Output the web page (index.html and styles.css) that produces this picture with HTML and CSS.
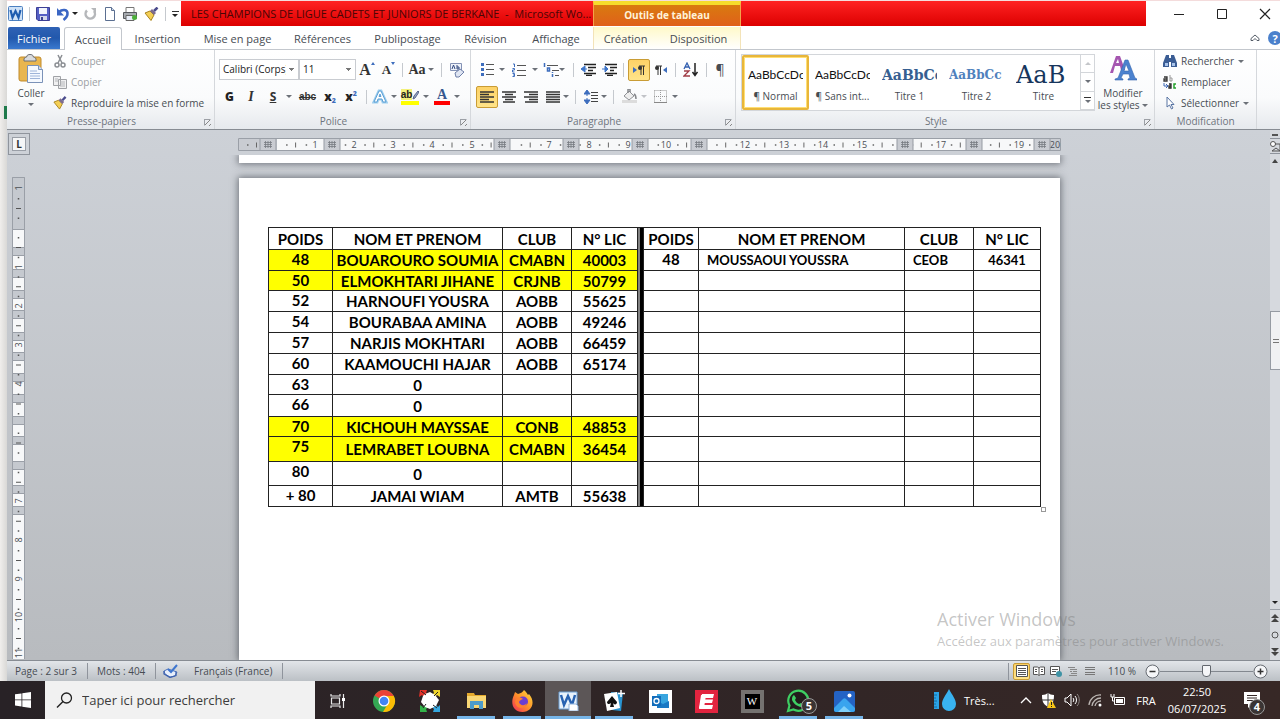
FILE: index.html
```html
<!DOCTYPE html>
<html lang="fr">
<head>
    <meta charset="UTF-8">
    <meta name="viewport" content="width=device-width, initial-scale=1.0">
    <title>LES CHAMPIONS DE LIGUE CADETS ET JUNIORS DE BERKANE - Microsoft Word</title>
    <link rel="stylesheet" href="styles.css">
</head>
<body>
    <div class="desktop">
        <div class="behind"><span class="behind-mark"></span></div>

        <div class="window">
            <!-- Title bar -->
            <header class="titlebar">
                <div class="quick-access">
                    <svg class="q-word" width="15" height="15" viewBox="0 0 15 15"><rect x=".5" y=".5" width="14" height="14" rx="1" fill="#cfe2f7" stroke="#4c80c0"/><path d="M2.500 4l2 7.500 3-6.500 3 6.500 2-7.500" fill="none" stroke="#1f5db0" stroke-width="2.200"/></svg>
                    <span class="sep"></span>
                    <button class="q-btn" aria-label="Enregistrer"><svg width="14" height="14" viewBox="0 0 14 14"><path d="M.5.5h13v13H2L.5 12z" fill="#5560c4" stroke="#3c3f95"/><path d="M3 1h8v6H3z" fill="#f2f5fc"/><path d="M4 9h7v4H4z" fill="#d4d8ea"/><path d="M5 10h2v3H5z" fill="#39408f"/></svg></button>
                    <button class="q-btn q-undo" aria-label="Annuler"><svg width="14" height="14" viewBox="0 0 14 14"><path d="M3 5c3-3 9-3 8.500 2 0 3-2 4.500-4 6" fill="none" stroke="#3b66c4" stroke-width="2.500"/><path d="M1 1v7.500h7z" fill="#3b66c4"/></svg><i class="caret dark"></i></button>
                    <button class="q-btn" aria-label="Rétablir"><svg width="13" height="14" viewBox="0 0 13 14"><path d="M3 3.500a4.700 4.700 0 1 0 7 .5" fill="none" stroke="#b5b7ba" stroke-width="2.500"/><path d="M7 1h5v5z" fill="#b5b7ba"/></svg></button>
                    <button class="q-btn" aria-label="Nouveau"><svg width="12" height="14" viewBox="0 0 12 14"><path d="M1.500.5h6l3 3v10h-9z" fill="#fff" stroke="#5b6f91"/><path d="M7.500.5v3h3" fill="#cdd9ec" stroke="#5b6f91"/></svg></button>
                    <button class="q-btn" aria-label="Impression rapide"><svg width="16" height="14" viewBox="0 0 16 14"><path d="M4 .5h8v5H4z" fill="#fff" stroke="#777"/><path d="M1.500 5.500h13v6h-13z" fill="#a7abb0" stroke="#55585d"/><path d="M4 8.500h8v5H4z" fill="#e8eef8" stroke="#666"/><circle cx="12.500" cy="10.500" r="2.500" fill="#4caf3a"/></svg></button>
                    <button class="q-btn" aria-label="Reproduire la mise en forme"><svg width="15" height="14" viewBox="0 0 15 14"><path d="M1 6l5-2 4 4-3 5.500z" fill="#f4cf55" stroke="#a8821d"/><path d="M6 4l2-2 4 4-2 2z" fill="#7d6c8f"/><path d="M10 4l3.500-3.500" stroke="#4a4b8c" stroke-width="2.500"/></svg></button>
                    <span class="sep"></span>
                    <button class="q-btn q-more" aria-label="Personnaliser"><i class="bar"></i><i class="caret dark"></i></button>
                </div>
                <div class="title-text">LES CHAMPIONS DE LIGUE CADETS ET JUNIORS DE BERKANE &nbsp;-&nbsp; Microsoft Wo...</div>
                <div class="context-title">Outils de tableau</div>
                <div class="title-rest"></div>
                <div class="window-buttons">
                    <button aria-label="Réduire"><svg width="12" height="12" viewBox="0 0 12 12"><path d="M1 6.500h10" stroke="#222"/></svg></button>
                    <button aria-label="Agrandir"><svg width="12" height="12" viewBox="0 0 12 12"><path d="M1.500 1.500h9v9h-9z" fill="none" stroke="#222"/></svg></button>
                    <button aria-label="Fermer"><svg width="12" height="12" viewBox="0 0 12 12"><path d="M1 1l10 10M11 1L1 11" stroke="#222" stroke-width="1.200"/></svg></button>
                </div>
            </header>

            <!-- Ribbon tabs -->
            <nav class="tabs">
                <button class="tab file">Fichier</button>
                <button class="tab active">Accueil</button>
                <button class="tab t-insert">Insertion</button>
                <button class="tab t-layout">Mise en page</button>
                <button class="tab t-refs">Références</button>
                <button class="tab t-mail">Publipostage</button>
                <button class="tab t-review">Révision</button>
                <button class="tab t-view">Affichage</button>
                <div class="context-tabs">
                    <button class="tab">Création</button>
                    <button class="tab">Disposition</button>
                </div>
                <div class="tabs-end">
                    <button aria-label="Réduire le ruban"><svg width="10" height="8" viewBox="0 0 10 8"><path d="M1 4.500L5 1l4 3.500v2H7L5 4.500 3 6.500H1z" fill="#fff" stroke="#555d68"/></svg></button>
                    <button class="help" aria-label="Aide">?</button>
                </div>
            </nav>

            <!-- Ribbon -->
            <section class="ribbon">
                <div class="group">
                    <div class="group-body clipboard">
                        <button class="big">
                            <svg width="26" height="29" viewBox="0 0 26 29"><rect x="1" y="3" width="22" height="24" rx="2" fill="#e9b64f" stroke="#c08a2c"/><path d="M6 5c0-2 3-1 3-3s6-2 6 0 3 1 3 3v2H6z" fill="#d9dbde" stroke="#6b6f75"/><path d="M9.500 11.500h11l4 4v13h-15z" fill="#f5f9ff" stroke="#7b92b8"/><path d="M20.500 11.500v4h4" fill="#cfdcf0" stroke="#7b92b8"/><path d="M12 17h7M12 19.500h10M12 22h10M12 24.500h10" stroke="#9fb4d8"/></svg>
                            <span>Coller</span><i class="caret"></i>
                        </button>
                        <div class="stack">
                            <button class="line-btn off"><svg width="14" height="14" viewBox="0 0 14 14"><path d="M5 1l4 8M9 1L5 9" stroke="#8b8e93" stroke-width="1.500"/><circle cx="4" cy="11" r="2" fill="none" stroke="#8b8e93" stroke-width="1.500"/><circle cx="10" cy="11" r="2" fill="none" stroke="#8b8e93" stroke-width="1.500"/></svg>Couper</button>
                            <button class="line-btn off"><svg width="14" height="14" viewBox="0 0 14 14"><path d="M.5 1.500h7v9h-7zM5.500 4.500h8v9h-8z" fill="#f0f0f1" stroke="#a0a2a6"/><path d="M2 4h3M2 6h3M7 7h5M7 9h5M7 11h5" stroke="#b5b7ba"/></svg>Copier</button>
                            <button class="line-btn"><svg width="14" height="14" viewBox="0 0 15 14"><path d="M1 6l5-2 4 4-3 5.500z" fill="#f4cf55" stroke="#a8821d"/><path d="M6 4l2-2 4 4-2 2z" fill="#7d6c8f"/><path d="M10 4l3.500-3.500" stroke="#4a4b8c" stroke-width="2.500"/></svg>Reproduire la mise en forme</button>
                        </div>
                    </div>
                    <div class="group-title">Presse-papiers<i class="launcher"></i></div>
                </div>

                <div class="group">
                    <div class="group-body rows">
                        <div class="row font-row1">
                            <select class="combo" aria-label="Police"><option>Calibri (Corps)</option></select>
                            <select class="combo" aria-label="Taille"><option>11</option></select>
                            <button class="serif grow">A<i class="up"></i></button>
                            <button class="serif shrink">A<i class="down"></i></button>
                            <span class="sep"></span>
                            <button class="serif case">Aa<i class="caret"></i></button>
                            <span class="sep"></span>
                            <button aria-label="Effacer la mise en forme"><svg width="16" height="16" viewBox="0 0 16 16"><path d="M1.500 1.500h11v7h-11z" fill="#eef2fa" stroke="#8492b5"/><path d="M3 7l1.500-4L6 7M8 3v4h2V5H8" fill="none" stroke="#30487f"/><path d="M6 11l5-4 4 3-5 5H7z" fill="#dfe5f2" stroke="#6e7fa8"/></svg></button>
                        </div>
                        <div class="row font-row2">
                            <button class="bold">G</button>
                            <button class="italic">I</button>
                            <button class="under">S</button>
                            <i class="caret"></i>
                            <button class="strike">abc</button>
                            <button class="bold script">x<sub>2</sub></button>
                            <button class="bold script">x<sup>2</sup></button>
                            <span class="sep"></span>
                            <button aria-label="Effets de texte"><svg width="16" height="15" viewBox="0 0 16 15"><path d="M2 13L7 2h2l5 11h-3l-1-3H6l-1 3z" fill="#fff" stroke="#9ccdee" stroke-width="3"/><path d="M2 13L7 2h2l5 11h-3l-1-3H6l-1 3zM7 7.500h2L8 5z" fill="#fff" stroke="#5b9fd4"/></svg></button>
                            <i class="caret"></i>
                            <button class="marker"><span>ab</span><svg width="7" height="10" viewBox="0 0 7 10"><path d="M1 9l1-3 4-5 1 1-4 6z" fill="#9aa7c7" stroke="#56648a"/></svg></button>
                            <i class="caret"></i>
                            <button class="font-color">A</button>
                            <i class="caret"></i>
                        </div>
                    </div>
                    <div class="group-title">Police<i class="launcher"></i></div>
                </div>

                <div class="group">
                    <div class="group-body rows">
                        <div class="row para-row1">
                            <button aria-label="Puces"><svg width="13" height="13" viewBox="0 0 13 13"><path d="M0 1.500h3M0 6.500h3M0 11.500h3" stroke="#3d6dbd" stroke-width="3"/><path d="M5 1.500h8M5 6.500h8M5 11.500h8" stroke="#555"/></svg></button>
                            <i class="caret"></i>
                            <button aria-label="Numérotation"><svg width="14" height="14" viewBox="0 0 14 14"><path d="M1 1h1.500v3M.5 5.500h2v1.500h-2v2h2M.5 10.500h2v3h-2M1 12h1" fill="none" stroke="#3d6dbd"/><path d="M5 2.500h9M5 7.500h9M5 12.500h9" stroke="#555"/></svg></button>
                            <i class="caret"></i>
                            <button class="with-caret" aria-label="Liste à plusieurs niveaux"><svg width="16" height="14" viewBox="0 0 16 14"><path d="M1.500 0v4M4.500 5v3h2V5zM9.500 9v1M9.500 11v3" fill="none" stroke="#3d6dbd" stroke-width="1.500"/><path d="M4 2.500h11M9 7.500h7M12 12.500h4" stroke="#555"/></svg><i class="caret"></i></button>
                            <span class="sep"></span>
                            <button aria-label="Diminuer le retrait"><svg width="15" height="13" viewBox="0 0 15 13"><path d="M3 1.500h12M7 4.500h8M7 7.500h5M3 10.500h12M5 12.500h6" stroke="#222" stroke-width="1.500"/><path d="M0 6l4-3v6zM3 6h3" fill="#3d74c8" stroke="#3d74c8"/></svg></button>
                            <button aria-label="Augmenter le retrait"><svg width="15" height="13" viewBox="0 0 15 13"><path d="M3 1.500h12M8 4.500h7M8 7.500h4M3 10.500h12M5 12.500h6" stroke="#222" stroke-width="1.500"/><path d="M6 6L3 3v6zM0 6h4" fill="#3d74c8" stroke="#3d74c8"/></svg></button>
                            <span class="sep"></span>
                            <button class="on" aria-label="De gauche à droite"><svg width="12" height="10" viewBox="0 0 12 10"><path d="M0 2l4 3-4 3z" fill="#3d6dbd"/><path d="M8 1v9M10.500 1v9M6 1h6" stroke="#333"/><circle cx="7" cy="3" r="2" fill="#333"/></svg></button>
                            <button aria-label="De droite à gauche"><svg width="12" height="10" viewBox="0 0 12 10"><path d="M12 2L8 5l4 3z" fill="#3d6dbd"/><path d="M3 1v9M5.500 1v9M1 1h6" stroke="#333"/><circle cx="2" cy="3" r="2" fill="#333"/></svg></button>
                            <span class="sep"></span>
                            <button aria-label="Trier"><svg width="15" height="15" viewBox="0 0 15 15"><path d="M1 7l3-6 3 6M2 5h4" fill="none" stroke="#3460b0" stroke-width="1.300"/><path d="M1 9h5l-5 5h6" fill="none" stroke="#a03c46" stroke-width="1.300"/><path d="M12 1v12M9.500 10l2.500 3.500 2.500-3.500" fill="none" stroke="#222" stroke-width="1.500"/></svg></button>
                            <span class="sep"></span>
                            <button class="pilcrow">¶</button>
                        </div>
                        <div class="row para-row2">
                            <button class="on" aria-label="Aligner à gauche"><svg width="14" height="12" viewBox="0 0 14 12"><path d="M0 1h14M0 3.500h9M0 6h14M0 8.500h9M0 11h14" stroke="#333" stroke-width="1.300"/></svg></button>
                            <button aria-label="Centrer"><svg width="14" height="12" viewBox="0 0 14 12"><path d="M0 1h14M3 3.500h8M0 6h14M3 8.500h8M1 11h12" stroke="#333" stroke-width="1.300"/></svg></button>
                            <button aria-label="Aligner à droite"><svg width="14" height="12" viewBox="0 0 14 12"><path d="M0 1h14M5 3.500h9M0 6h14M5 8.500h9M1 11h13" stroke="#333" stroke-width="1.300"/></svg></button>
                            <button aria-label="Justifier"><svg width="14" height="12" viewBox="0 0 14 12"><path d="M0 1h14M0 3.500h14M0 6h14M0 8.500h14M0 11h14" stroke="#333" stroke-width="1.300"/></svg></button>
                            <i class="caret"></i>
                            <span class="sep"></span>
                            <button aria-label="Interligne"><svg width="14" height="14" viewBox="0 0 14 14"><path d="M3 0l3 4H0zM3 14l3-4H0zM3 3v3M3 8v3" fill="#3d6dbd" stroke="#3d6dbd"/><path d="M7 2.500h7M7 5.500h7M7 8.500h7M7 11.500h7" stroke="#444"/></svg></button>
                            <i class="caret"></i>
                            <span class="sep"></span>
                            <button aria-label="Trame de fond"><svg width="15" height="15" viewBox="0 0 15 15"><path d="M0 11h15v3H0z" fill="#dcdcdc"/><path d="M2 7l5-5 5 5-5 4z" fill="#eee" stroke="#909296"/><path d="M6 4V0h2v3M12 5c2 1 2 3 2 5" fill="none" stroke="#85878b" stroke-width="1.500"/></svg></button>
                            <i class="caret off"></i>
                            <button aria-label="Bordures"><svg width="13" height="13" viewBox="0 0 13 13"><path d="M.5.5h12v12M.5.5v12M6.500 0v13M0 6.500h13" fill="none" stroke="#999" stroke-dasharray="1 1"/><path d="M0 12.500h13" stroke="#888"/></svg></button>
                            <i class="caret"></i>
                        </div>
                    </div>
                    <div class="group-title">Paragraphe<i class="launcher"></i></div>
                </div>

                <div class="group">
                    <div class="group-body styles">
                        <div class="gallery">
                            <button class="style-item selected"><span class="sample">AaBbCcDc</span><span class="name">¶ Normal</span></button>
                            <button class="style-item"><span class="sample">AaBbCcDc</span><span class="name">¶ Sans int...</span></button>
                            <button class="style-item"><span class="sample h1">AaBbCc</span><span class="name">Titre 1</span></button>
                            <button class="style-item"><span class="sample h2">AaBbCc</span><span class="name">Titre 2</span></button>
                            <button class="style-item"><span class="sample h0">AaB</span><span class="name">Titre</span></button>
                            <div class="gallery-scroll">
                                <button aria-label="Précédent"><i class="caret flip off"></i></button>
                                <button aria-label="Suivant"><i class="caret"></i></button>
                                <button aria-label="Autres"><i class="bar"></i><i class="caret"></i></button>
                            </div>
                        </div>
                        <button class="big change">
                            <svg width="28" height="27" viewBox="0 0 28 27"><path d="M1 18L7 1h4l5 14h-4l-1-4H6l-2 7zM7 8h3L9 4z" fill="#a556b0"/><path d="M6 25v-1l3-1 7-18h3l7 18 2 1v1h-9v-1l2-1-1-4h-6l-2 4 2 1v1zM15 16h5l-3-7z" fill="#4b82cf" stroke="#3567ae" stroke-width=".6"/></svg>
                            <span>Modifier<br>les styles <i class="caret"></i></span>
                        </button>
                    </div>
                    <div class="group-title">Style<i class="launcher"></i></div>
                </div>

                <div class="group">
                    <div class="group-body">
                        <div class="stack editing">
                            <button class="line-btn"><svg width="14" height="12" viewBox="0 0 14 12"><path d="M3 0h3v3h2V0h3l3 8v4H8V7H6v5H0V8z" fill="#3b5d94"/><path d="M2 8h3v3H2zM9 8h3v3H9z" fill="#a9c4ea"/></svg>Rechercher<i class="caret"></i></button>
                            <button class="line-btn"><svg width="14" height="14" viewBox="0 0 14 14"><path d="M1 2h3v4H1V4h3" fill="none" stroke="#333" stroke-width="1.300"/><path d="M7 0v6h2V3H7" fill="none" stroke="#999"/><path d="M1 8v3h3M3 9l2 2-2 2" fill="none" stroke="#3b66b4"/><path d="M6 9h2v4H6v-2h2" fill="none" stroke="#222" stroke-width="1.300"/><path d="M13 9h-2v4h2" fill="none" stroke="#25a02c" stroke-width="1.500"/></svg>Remplacer</button>
                            <button class="line-btn"><svg width="14" height="14" viewBox="0 0 14 14"><path d="M4 1v10l2.500-2 2 4 1.500-1-2-3.500h3z" fill="#fff" stroke="#5874a3"/></svg>Sélectionner<i class="caret"></i></button>
                        </div>
                    </div>
                    <div class="group-title plain">Modification</div>
                </div>
            </section>

            <!-- Rulers, document and scroll bar -->
            <main class="workspace">
                <div class="ruler-corner"><button aria-label="Tabulation">L</button></div>
                <div class="ruler-top">
                    <svg width="823" height="14" viewBox="0 0 823 14">
                        <defs>
                            <g id="colmark"><path d="M0 1h16v11H0z" fill="#c9ccd2"/><path d="M0 1v11M16 1v11" stroke="#969ba3"/><path d="M4 4.500h8M4 6.500h8M4 8.500h8M5.500 3v7M8 3v7M10.500 3v7" stroke="#777b82" stroke-width=".8"/></g>
                        </defs>
                        <path d="M.5.5h822v12H.5z" fill="#f7f8f9" stroke="#9a9fa7"/>
                        <path d="M1 1h38v11H1zM796 1h26v11h-26z" fill="#c9ccd2"/>
                        <path d="M9 7h807" stroke="#666" stroke-width="1.500" stroke-dasharray="1.500 18.050"/>
                        <path d="M18 7h800" stroke="#666" stroke-width="5" stroke-dasharray="1 38.100"/>
                        <g class="ruler-num">
                            <text x="77" y="10">1</text><text x="116" y="10">2</text><text x="155" y="10">3</text><text x="194" y="10">4</text><text x="234" y="10">5</text><text x="311" y="10">7</text><text x="351" y="10">8</text><text x="390" y="10">9</text><text x="428" y="10">10</text><text x="507" y="10">12</text><text x="546" y="10">13</text><text x="585" y="10">14</text><text x="624" y="10">15</text><text x="703" y="10">17</text><text x="781" y="10">19</text><text x="817" y="10">20</text>
                        </g>
                        <use href="#colmark" x="22"/><use href="#colmark" x="86"/><use href="#colmark" x="256"/><use href="#colmark" x="325"/><use href="#colmark" x="394"/><use href="#colmark" x="453"/><use href="#colmark" x="659"/><use href="#colmark" x="728"/><use href="#colmark" x="796"/>
                    </svg>
                </div>
                <div class="ruler-left">
                    <svg width="14" height="482" viewBox="0 0 14 482">
                        <path d="M.5.500h12v482h-12z" fill="#f7f8f9" stroke="#9a9fa7"/>
                        <g fill="#c5c9cf" stroke="#9a9fa7"><path d="M.5.500h12v52h-12zM.5 70.500h12v8h-12zM.5 92.500h12v8h-12zM.5 113.500h12v8h-12zM.5 133.500h12v8h-12zM.5 155.500h12v8h-12zM.5 175.500h12v8h-12zM.5 196.500h12v8h-12zM.5 217.500h12v8h-12zM.5 239.500h12v8h-12zM.5 259.500h12v8h-12zM.5 284.500h12v8h-12zM.5 308.500h12v8h-12zM.5 329.500h12v8h-12z"/></g>
                        <path d="M6.500 21v460" stroke="#555" stroke-width="1.500" stroke-dasharray="1.500 18.050"/>
                        <path d="M6.500 31v450" stroke="#555" stroke-width="5" stroke-dasharray="1 38.100"/>
                        <g class="ruler-num">
                            <text transform="translate(10 11) rotate(-90)">1</text><text transform="translate(10 90) rotate(-90)">1</text><text transform="translate(10 129) rotate(-90)">2</text><text transform="translate(10 168) rotate(-90)">3</text><text transform="translate(10 207) rotate(-90)">4</text><text transform="translate(10 324) rotate(-90)">7</text><text transform="translate(10 363) rotate(-90)">8</text><text transform="translate(10 402) rotate(-90)">9</text><text transform="translate(10 440) rotate(-90)">10</text><text transform="translate(10 476) rotate(-90)">11</text>
                        </g>
                    </svg>
                </div>

                <div class="document">
                    <div class="page previous"></div>
                    <article class="page current">
                        <table>
                            <colgroup>
                                <col class="c-poids"><col class="c-nom"><col class="c-club"><col class="c-lic"><col class="c-bar"><col class="c-poids2"><col class="c-nom2"><col class="c-club2"><col class="c-lic2">
                            </colgroup>
                            <tr class="h22"><th>POIDS</th><th>NOM ET PRENOM</th><th>CLUB</th><th>N° LIC</th><td class="divider" rowspan="13"></td><th>POIDS</th><th>NOM ET PRENOM</th><th>CLUB</th><th>N° LIC</th></tr>
                            <tr class="h21 winner"><td class="poids">48</td><td>BOUAROURO SOUMIA</td><td>CMABN</td><td>40003</td><td class="poids">48</td><td class="small left">MOUSSAOUI YOUSSRA</td><td class="small left">CEOB</td><td class="small">46341</td></tr>
                            <tr class="h20 winner"><td class="poids">50</td><td>ELMOKHTARI JIHANE</td><td>CRJNB</td><td>50799</td><td></td><td></td><td></td><td></td></tr>
                            <tr class="h21"><td class="poids">52</td><td>HARNOUFI YOUSRA</td><td>AOBB</td><td>55625</td><td></td><td></td><td></td><td></td></tr>
                            <tr class="h21"><td class="poids">54</td><td>BOURABAA AMINA</td><td>AOBB</td><td>49246</td><td></td><td></td><td></td><td></td></tr>
                            <tr class="h21"><td class="poids">57</td><td>NARJIS MOKHTARI</td><td>AOBB</td><td>66459</td><td></td><td></td><td></td><td></td></tr>
                            <tr class="h21"><td class="poids">60</td><td>KAAMOUCHI HAJAR</td><td>AOBB</td><td>65174</td><td></td><td></td><td></td><td></td></tr>
                            <tr class="h20"><td class="poids">63</td><td>0</td><td></td><td></td><td></td><td></td><td></td><td></td></tr>
                            <tr class="h22"><td class="poids">66</td><td>0</td><td></td><td></td><td></td><td></td><td></td><td></td></tr>
                            <tr class="h20 winner"><td class="poids">70</td><td>KICHOUH MAYSSAE</td><td>CONB</td><td>48853</td><td></td><td></td><td></td><td></td></tr>
                            <tr class="h25 winner"><td class="poids">75</td><td>LEMRABET LOUBNA</td><td>CMABN</td><td>36454</td><td></td><td></td><td></td><td></td></tr>
                            <tr class="h24"><td class="poids">80</td><td>0</td><td></td><td></td><td></td><td></td><td></td><td></td></tr>
                            <tr class="h21"><td class="poids">+ 80</td><td>JAMAI WIAM</td><td>AMTB</td><td>55638</td><td></td><td></td><td></td><td></td></tr>
                        </table>
                        <span class="table-handle"></span>
                    </article>
                </div>

                <div class="scrollbar">
                    <span class="split"></span>
                    <button class="ruler-toggle" aria-label="Règle"><svg width="12" height="13" viewBox="0 0 12 13"><circle cx="4" cy="4" r="2.500" fill="#fff" stroke="#555"/><path d="M6 4h5v7H3l4-3 4 3" fill="none" stroke="#555"/></svg></button>
                    <i class="caret flip dark"></i>
                    <span class="track-top"></span>
                    <span class="thumb"></span>
                    <span class="track-bottom"></span>
                    <i class="caret dark"></i>
                    <div class="browse">
                        <svg width="8" height="8" viewBox="0 0 8 8"><path d="M4 0l4 4H0zM4 4l4 4H0z" fill="#444"/></svg>
                        <svg width="8" height="8" viewBox="0 0 8 8"><circle cx="4" cy="4" r="3" fill="none" stroke="#555"/></svg>
                        <svg width="8" height="8" viewBox="0 0 8 8"><path d="M0 0h8L4 4zM0 4h8L4 8z" fill="#444"/></svg>
                    </div>
                </div>
            </main>

            <!-- Status bar -->
            <footer class="status">
                <span class="s-page">Page : 2 sur 3</span>
                <span class="s-words">Mots : 404</span>
                <span class="s-lang"><svg width="16" height="14" viewBox="0 0 16 14"><path d="M1 7l4-2 9 3-2 4-5 1-5-3z" fill="#e8effb" stroke="#4c70b8"/><path d="M1 7v3l6 3.500 6-2V8" fill="none" stroke="#3e62ae" stroke-width="1.300"/><path d="M5 5l3 3 6-7" fill="none" stroke="#3f76cf" stroke-width="2"/></svg>Français (France)</span>
                <div class="views">
                    <button class="on" aria-label="Page"><svg width="12" height="12" viewBox="0 0 12 12"><path d="M.5.5h11v11H.5z" fill="#fff" stroke="#555"/><path d="M2 3.500h8M2 5.500h8M2 7.500h8M2 9.500h8" stroke="#555"/></svg></button>
                    <button aria-label="Lecture plein écran"><svg width="12" height="10" viewBox="0 0 12 10"><path d="M.5 1h4L6 2l1.500-1h4v7.500h-4L6 9.500l-1.500-1h-4zM6 2v7" fill="#fff" stroke="#555"/><path d="M2 3.500h2M2 5.500h2M8 3.500h2M8 5.500h2" stroke="#555"/></svg></button>
                    <button aria-label="Web"><svg width="12" height="11" viewBox="0 0 12 11"><path d="M.5.5h9v8h-9z" fill="#fff" stroke="#555"/><path d="M2 3.500h6M2 5.500h4" stroke="#555"/><circle cx="9" cy="8" r="3" fill="#3e93a5"/></svg></button>
                    <button aria-label="Plan"><svg width="10" height="10" viewBox="0 0 10 10"><path d="M0 1.500h7M2 3.500h7M2 5.500h2M5 5.500h4M3 7.500h6M1 9.500h8" stroke="#888"/></svg></button>
                    <button aria-label="Brouillon"><svg width="10" height="10" viewBox="0 0 10 10"><path d="M0 1.500h10M0 3.500h10M0 6.500h10M0 8.500h10" stroke="#777"/></svg></button>
                </div>
                <label class="zoom-value" for="zoom">110 %</label>
                <button class="round" aria-label="Zoom arrière"><svg width="15" height="15" viewBox="0 0 15 15"><circle cx="7.500" cy="7.500" r="6.500" fill="#f5f6f8" stroke="#666b72"/><path d="M4.500 7.500h6" stroke="#333" stroke-width="1.500"/></svg></button>
                <input id="zoom" type="range" min="0" max="100" value="50">
                <button class="round" aria-label="Zoom avant"><svg width="15" height="15" viewBox="0 0 15 15"><circle cx="7.500" cy="7.500" r="6.500" fill="#f5f6f8" stroke="#666b72"/><path d="M4.500 7.500h6M7.500 4.500v6" stroke="#333" stroke-width="1.500"/></svg></button>
            </footer>

            <div class="activation">
                <p class="activation-title">Activer Windows</p>
                <p>Accédez aux paramètres pour activer Windows.</p>
            </div>
        </div>
    </div>

    <!-- Windows taskbar -->
    <div class="taskbar">
        <button class="start" aria-label="Démarrer"><svg width="16" height="16" viewBox="0 0 16 16"><path d="M0 2.300L6.500 1.400v6.100H0zM7.300 1.300L16 0v7.500H7.300zM0 8.300h6.500v6.200L0 13.600zM7.300 8.300H16V16l-8.700-1.300z" fill="#fff"/></svg></button>
        <label class="search">
            <svg width="17" height="17" viewBox="0 0 17 17"><circle cx="10.500" cy="6" r="5" fill="none" stroke="#222" stroke-width="1.300"/><path d="M7 9.500L1 15.500" stroke="#222" stroke-width="1.400"/></svg>
            <input type="text" placeholder="Taper ici pour rechercher">
        </label>
        <div class="apps">
            <button aria-label="Affichage des tâches"><svg width="16" height="16" viewBox="0 0 16 16"><path d="M1 1v2h9V1M1 15v-2h9v2M1.500 5h8v6h-8zM13.500 1v14" fill="none" stroke="#e8e8e8" stroke-width="1.200"/><path d="M12 5h3v3h-3z" fill="#fff"/></svg></button>
            <button aria-label="Chrome"><svg width="24" height="24" viewBox="0 0 24 24"><circle cx="12" cy="12" r="11" fill="#34a853"/><path d="M12 12L2.500 6.500A11 11 0 0 1 21.500 6.500L22 7H12z" fill="#ea4335"/><path d="M12 7h9.800A11 11 0 0 1 11 23l5-8.500z" fill="#fbbc05"/><circle cx="12" cy="12" r="5.500" fill="#fff"/><circle cx="12" cy="12" r="4.300" fill="#4285f4"/></svg></button>
            <button aria-label="Jeu de cartes"><svg width="24" height="24" viewBox="0 0 24 24"><path d="M2 1h7L8 4l6 6-3 3-7-7-3 2z" fill="#e43229"/><path d="M22 1v7l-3-2-7 7-3-3 7-6-1-3z" fill="#f0d52d"/><path d="M2 23v-7l3 2 7-7 3 3-7 6 1 3z" fill="#34b44a"/><path d="M22 23h-7l1-3-6-6 3-3 7 7 2-2z" fill="#35a7df"/><path d="M7 5l5-2 5 3 4 5-3 6-6 3-5-2-4-5 2-6z" fill="#fff"/><path d="M3 2l5 4M20 3l-4 4M19 19l-4-3M5 19l3-4" stroke="#222"/></svg></button>
            <button class="open" aria-label="Explorateur"><svg width="21" height="18" viewBox="0 0 21 18"><path d="M1 1h7l1 2h11v13H1z" fill="#e5aa2d"/><path d="M1 4h19v12H1z" fill="#f9d775"/><path d="M4 17V9h13v8h-4v-4H8v4z" fill="#4d9bc9"/></svg></button>
            <button class="open" aria-label="Firefox"><svg width="23" height="23" viewBox="0 0 23 23"><defs><linearGradient id="ff" x1="1" y1="0" x2="0" y2="1"><stop offset="0" stop-color="#ffe141"/><stop offset=".5" stop-color="#ff9029"/><stop offset="1" stop-color="#f2295c"/></linearGradient></defs><path d="M3 5l1-3 3 2c3-1 5-2 6-4 2 2 3 3 4 5l1-1c7 8 3 18-6.500 18S-1 13 3 5z" fill="url(#ff)"/><circle cx="12" cy="11.500" r="5" fill="#6b3ed1"/><path d="M5 9c3-3 6-1 7 0-2 1-3 1-4 3 1 4 6 4 8 1-1 6-11 7-12-1z" fill="#ff8130"/></svg></button>
            <button class="open current" aria-label="Word"><svg width="21" height="20" viewBox="0 0 21 20"><path d="M1 1h18v17H1z" fill="#e9f2fb" stroke="#6da0d6"/><path d="M3 4l3 10 4-9 4 9 3-10" fill="none" stroke="#2862b1" stroke-width="2.500"/><path d="M11 13h7l2 2v5h-9z" fill="#fff" stroke="#8fb3dd"/></svg></button>
            <button class="open" aria-label="Solitaire"><svg width="22" height="22" viewBox="0 0 22 22"><path d="M8 2l12 1-2 18-9-1z" fill="#2894d1"/><path d="M1 4l13-2 3 16-13 3z" fill="#fff"/><path d="M9 6l5 6c0 3-3 3-4 1l1 4H7l1-4c-2 2-4 1-4-1z" fill="#111"/><path d="M18 0v7M15 3.500h7" stroke="#fff" stroke-width="1.500"/></svg></button>
            <button aria-label="Outlook"><svg width="23" height="23" viewBox="0 0 23 23"><path d="M0 0h23v23H0z" fill="#fff"/><path d="M8 4h11v12H8z" fill="#38a5df"/><path d="M8 11l6 3 6-3v7H8z" fill="#1b79c4"/><path d="M3 6h9v10H3z" fill="#126dbb"/><circle cx="7.500" cy="11" r="2.500" fill="none" stroke="#fff" stroke-width="1.300"/></svg></button>
            <button aria-label="E"><svg width="23" height="23" viewBox="0 0 23 23"><path d="M0 0h23v23H0z" fill="#e2243f"/><path d="M7 4h12l-1 4H6zM6 9.500h12l-1 3.500H5zM5 15h13l-1 4H4z" fill="#fff"/><path d="M6 5h5L9 18H4z" fill="#fff"/></svg></button>
            <button aria-label="W"><span class="w-tile">W</span></button>
            <button class="open whatsapp" aria-label="WhatsApp"><svg width="24" height="24" viewBox="0 0 24 24"><path d="M2 22l1.500-5.500A10 10 0 1 1 7.500 20.500z" fill="#211d1c" stroke="#3ecf63" stroke-width="2.200"/><path d="M8 6l2 3-1 2c1 2 2 3 4 4l2-1 3 2c-1 3-4 2-6 1-3-1-5-4-6-6 0-2 0-4 2-5z" fill="#3ecf63"/></svg><span class="badge">5</span></button>
            <button class="open" aria-label="Photos"><svg width="21" height="21" viewBox="0 0 21 21"><rect width="21" height="21" rx="2" fill="#2463c4"/><path d="M0 17l9-9c1-1 2-1 3 0l9 9v2c0 1-1 2-2 2H2c-1 0-2-1-2-2z" fill="#39a4ee"/><path d="M4 21l6-6 7 6z" fill="#7fd0fa"/><circle cx="15.500" cy="4.500" r="2" fill="#fff"/></svg></button>
        </div>
        <div class="tray">
            <button class="weather"><svg width="22" height="23" viewBox="0 0 22 23"><path d="M0 3h5v17H0z" fill="#2ba3e6"/><path d="M0 6h3M0 9h2M0 12h3M0 15h2M0 18h3" stroke="#176c9e"/><path d="M15 0c3 6 7 10 7 15a7 7 0 0 1-14 0c0-5 4-9 7-15z" fill="#39b3f0"/></svg>Très...</button>
            <button aria-label="Icônes cachées"><svg width="12" height="8" viewBox="0 0 12 8"><path d="M1 7l5-5 5 5" fill="none" stroke="#fff" stroke-width="1.300"/></svg></button>
            <button aria-label="Sécurité"><svg width="14" height="15" viewBox="0 0 14 15"><path d="M0 2c3 0 4-1 6-2 2 1 3 2 6 2 0 6-1 9-6 12C1 11 0 8 0 2z" fill="#fff"/><path d="M6 0v14M0 7h12" stroke="#333"/><path d="M9 6l5 9H5z" fill="#f7c516"/><path d="M9.500 9v3M9.500 13v1" stroke="#222"/></svg></button>
            <button aria-label="Volume"><svg width="16" height="14" viewBox="0 0 16 14"><path d="M1 5h2l4-4v12L3 9H1z" fill="none" stroke="#fff"/><path d="M9 5c1 1 1 3 0 4M11 3c2 2 2 6 0 8" fill="none" stroke="#fff"/><path d="M13 1c3 3 3 9 0 12" fill="none" stroke="#8d8582"/></svg></button>
            <button aria-label="Réseau"><svg width="14" height="14" viewBox="0 0 14 14"><path d="M1 12A11 11 0 0 1 13 2M4 13a9 9 0 0 1 9-8M7 13a6 6 0 0 1 6-5" fill="none" stroke="#bbb5b2" stroke-width="1.300"/><circle cx="12" cy="12" r="1.500" fill="#fff"/></svg></button>
            <button aria-label="Batterie"><svg width="16" height="12" viewBox="0 0 16 12"><path d="M4.500 3.500h10v7h-10z" fill="none" stroke="#fff"/><path d="M6 5h7v4H6z" fill="#fff"/><path d="M1 0v3h3V0M2.500 3v4h2" fill="none" stroke="#fff"/></svg></button>
            <button class="lang">FRA</button>
            <button class="clock">22:50<br>06/07/2025</button>
            <button class="notice" aria-label="Notifications"><svg width="16" height="16" viewBox="0 0 16 16"><path d="M0 0h16v12H8l-4 4v-4H0z" fill="#fff"/><path d="M3 3.500h10M3 6h10M3 8.500h6" stroke="#352826"/></svg><span class="badge">4</span></button>
        </div>
    </div>
</body>
</html>
```
FILE: styles.css
```css
:root {
    --ui-font: "Open Sans", "Noto Sans", sans-serif;
    --text: #474c53;
    --line: #c3c7cd;
    --gold: #ffdf74;
    --gold-line: #c99c35;
}

* {
    margin: 0;
    padding: 0;
    box-sizing: border-box;
}

body {
    display: flex;
    flex-direction: column;
    height: 100vh;
    overflow: hidden;
    font-family: var(--ui-font);
    font-size: 11px;
    line-height: 15px;
    color: var(--text);
}

button {
    display: flex;
    align-items: center;
    justify-content: center;
    background: none;
    border: 0;
    font: inherit;
    color: inherit;
}

svg {
    display: block;
    flex: none;
}

.desktop {
    display: flex;
    flex: 1;
    min-height: 0;
}

.behind {
    width: 7px;
    padding: 106px 0 0 4px;
    background: linear-gradient(90deg, #f0eeec, #d9d8d6);
}

.behind-mark {
    display: block;
    height: 13px;
    background: #1f7a4b;
}

.window {
    position: relative;
    display: flex;
    flex-direction: column;
    flex: 1;
    min-width: 0;
    background: #fff;
}

/* small shared parts */
.caret {
    display: block;
    flex: none;
    width: 0;
    border: 3px solid transparent;
    border-top-color: #6c7178;
    border-bottom: 0;
}

.caret.flip {
    border-top: 0;
    border-bottom: 3px solid #6c7178;
}

.caret.dark {
    border-top-color: #222;
}

.caret.flip.dark {
    border-top: 0;
    border-bottom: 4px solid #444;
}

.caret.off {
    opacity: 0.4;
}

.bar {
    display: block;
    width: 7px;
    height: 1px;
    margin-bottom: 2px;
    background: #333;
}

.sep {
    width: 1px;
    height: 14px;
    background: #c5c9ce;
}

.on {
    height: 22px;
    background: linear-gradient(#fdd267, #ffe48a);
    border: 1px solid var(--gold-line);
    border-radius: 2px;
}

/* title bar */
.titlebar {
    display: flex;
    height: 27px;
    padding-bottom: 1px;
    border-top: 1px solid #f4dcdc;
}

.quick-access {
    display: flex;
    align-items: center;
    justify-content: space-between;
    width: 174px;
    padding: 0 2px 0 1px;
}

.q-undo {
    gap: 2px;
}

.q-more {
    flex-direction: column;
}

.title-text {
    width: 412px;
    padding-left: 10px;
    line-height: 25px;
    white-space: nowrap;
    overflow: hidden;
    color: #4a0505;
    background: linear-gradient(#ff2222, #dc0000);
}

.context-title {
    width: 148px;
    border: 1px solid #f3a24b;
    border-width: 0 1px;
    border-top: 4px solid #f6dc2c;
    line-height: 20px;
    text-align: center;
    font-size: 10px;
    font-weight: bold;
    color: #fff3d8;
    background: linear-gradient(#d97a10, #e0601a);
}

.title-rest {
    flex: 1;
    background: linear-gradient(#ff2222, #dc0000);
}

.window-buttons {
    display: flex;
    width: 134px;
    padding-left: 11px;
}

.window-buttons button {
    width: 43px;
    flex: none;
}

/* tabs */
.tabs {
    display: flex;
    height: 22px;
}

.tab {
    height: 22px;
    white-space: nowrap;
}

.tab.file {
    width: 52px;
    margin: 0 4px 0 1px;
    color: #fff;
    background: linear-gradient(#2f62b5, #2258ac 50%, #3a79cf);
    border-radius: 2px 2px 0 0;
}

.tab.active {
    width: 58px;
    height: 23px;
    border: 1px solid var(--line);
    border-bottom: 0;
    border-radius: 3px 3px 0 0;
    background: #fff;
    z-index: 1;
}

.t-insert {
    width: 71px;
}

.t-layout {
    width: 89px;
}

.t-refs {
    width: 81px;
}

.t-mail {
    width: 89px;
}

.t-review {
    width: 67px;
}

.t-view {
    width: 74px;
}

.context-tabs {
    display: flex;
    width: 148px;
    background: linear-gradient(#fff9c9, #fff);
    border: 1px solid #f3e3b8;
    border-width: 0 1px;
}

.context-tabs .tab {
    width: 64px;
}

.context-tabs .tab:last-child {
    width: 84px;
}

.tabs-end {
    display: flex;
    align-items: center;
    gap: 8px;
    margin-left: auto;
    margin-right: -2px;
}

.help {
    width: 14px;
    height: 14px;
    border-radius: 50%;
    font-weight: bold;
    color: #fff;
    background: #4a80cc;
}

/* ribbon */
.ribbon {
    display: grid;
    grid-template-columns: 208px 256px 265px 419px 102px 1fr;
    height: 81px;
    flex: none;
    border-top: 1px solid var(--line);
    border-bottom: 1px solid #878c93;
    font-size: 10px;
    background: linear-gradient(#fff, #fafbfc 60%, #e6e9ed);
}

.group {
    display: flex;
    flex-direction: column;
    border-right: 1px solid #d5d8dc;
    min-width: 0;
}

.group-body {
    flex: 1;
    min-height: 0;
}

.group-title {
    display: grid;
    grid-template-columns: 1fr 18px;
    height: 15px;
    text-align: center;
    color: #6e747d;
}

.group-title.plain {
    display: block;
}

.launcher {
    width: 7px;
    height: 7px;
    margin: 5px 0 0 8px;
    border: 1px solid #9ca0a6;
    border-right-color: transparent;
    border-bottom-color: transparent;
    background: linear-gradient(135deg, transparent 45%, #888 45%, #888 60%, transparent 60%);
}

.clipboard {
    display: flex;
}

.big {
    flex-direction: column;
    justify-content: flex-start;
    width: 46px;
    padding-top: 4px;
    line-height: 20px;
}

.clipboard .big {
    padding-left: 2px;
}

.stack {
    display: flex;
    flex-direction: column;
    gap: 1px;
    padding-top: 1px;
}

.line-btn {
    justify-content: flex-start;
    gap: 4px;
    height: 20px;
    white-space: nowrap;
}

.line-btn.off {
    color: #9b9ea3;
}

.editing {
    padding-left: 8px;
}

.rows {
    padding: 6px 0 0 4px;
}

.row {
    display: grid;
    align-items: center;
    justify-items: center;
    height: 27px;
}

.font-row1 {
    grid-template-columns: 80px 57px 22px 21px 7px 30px 11px 19px;
}

.font-row2 {
    grid-template-columns: 21px 22px 22px 10px 27px 18px 24px 7px 20px 8px 24px 8px 24px 6px;
}

.para-row1 {
    grid-template-columns: 24px 6px 27px 6px 31px 8px 23px 19px 8px 23px 21px 8px 22px 10px 18px;
}

.para-row2 {
    grid-template-columns: 24px 20px 24px 20px 6px 12px 19px 8px 10px 22px 8px 24px 6px;
}

.row .on {
    width: 22px;
}

.combo {
    appearance: none;
    width: 100%;
    height: 21px;
    padding: 0 12px 0 3px;
    border: 1px solid #c9ccd1;
    font: inherit;
    color: #222;
    background: linear-gradient(#777, #777) right 4px top 8px / 5px 1px no-repeat,
        linear-gradient(#777, #777) right 5px top 9px / 3px 1px no-repeat,
        linear-gradient(#777, #777) right 6px top 10px / 1px 1px no-repeat, #fff;
}

.serif {
    font-family: "Liberation Serif", serif;
    font-weight: bold;
    color: #333;
}

.grow {
    font-size: 16px;
    align-items: flex-start;
}

.shrink {
    font-size: 13px;
    align-items: flex-start;
}

.case {
    gap: 2px;
    font-size: 14px;
}

.up,
.down {
    border: 2px solid transparent;
    border-bottom: 3px solid #3d6dbd;
    border-top: 0;
}

.down {
    border-top: 3px solid #3d6dbd;
    border-bottom: 0;
}

.bold {
    font-family: "Open Sans", sans-serif;
    font-size: 12px;
    font-weight: 800;
    color: #222;
}

.italic {
    font: italic bold 14px "Liberation Serif", serif;
    color: #333;
}

.under {
    font-size: 12px;
    font-weight: bold;
    text-decoration: underline;
    color: #333;
}

.strike {
    font: bold 10px "Liberation Sans", sans-serif;
    text-decoration: line-through;
    color: #333;
}

.script sub,
.script sup {
    font-size: 7px;
    line-height: 7px;
    color: #3d6dbd;
}

.script sub {
    padding-top: 7px;
}

.script sup {
    padding-bottom: 7px;
}

.marker {
    height: 16px;
    border-bottom: 4px solid #ff0;
    font: bold 10px "Liberation Sans", sans-serif;
    color: #222;
}

.marker span {
    background: #f3f07a;
}

.font-color {
    width: 16px;
    height: 16px;
    border-bottom: 4px solid #f00;
    font: bold 14px "Liberation Serif", serif;
    color: #35578f;
}

.pilcrow {
    font-size: 14px;
}

/* style gallery */
.styles {
    display: flex;
    padding: 4px 0 0 5px;
}

.gallery {
    display: flex;
    width: 354px;
    height: 57px;
    border: 1px solid #d3d6da;
    background: #fff;
}

.style-item {
    flex-direction: column;
    justify-content: flex-end;
    width: 67px;
    padding: 0 6px 6px;
    border-radius: 2px;
}

.style-item.selected {
    padding: 0 4px 4px;
    border: 2px solid #e8b63a;
    box-shadow: inset 0 0 0 1px var(--gold);
}

.sample {
    width: 55px;
    height: 28px;
    overflow: hidden;
    font-family: Lato, "Open Sans", sans-serif;
    font-size: 12px;
    line-height: 28px;
    color: #111;
    text-align: left;
    white-space: nowrap;
}

.style-item .name {
    white-space: nowrap;
}

.sample.h1,
.sample.h2 {
    font-family: "DejaVu Serif", serif;
    font-size: 14px;
    font-weight: bold;
    color: #365f91;
}

.sample.h2 {
    font-size: 12px;
    color: #4f81bd;
}

.sample.h0 {
    font-family: "DejaVu Serif", serif;
    font-size: 24px;
    color: #17365d;
}

.gallery-scroll {
    display: flex;
    flex-direction: column;
    width: 14px;
    margin-left: auto;
}

.gallery-scroll button {
    flex: 1;
    flex-direction: column;
    border: 1px solid #d3d6da;
    border-width: 0 0 1px 1px;
}

.change {
    width: 56px;
    padding-top: 1px;
    line-height: 12px;
    white-space: nowrap;
}

.change span {
    padding-top: 5px;
}

.change .caret {
    display: inline-block;
    margin: 0 0 2px;
}

/* workspace */
.workspace {
    display: grid;
    grid-template-columns: 22px 1fr 10px;
    grid-template-rows: 25px 1fr;
    flex: 1;
    min-height: 0;
    background: linear-gradient(#cdd1d7, #b8bbbf);
}

.ruler-corner {
    padding: 3px 0 0 1px;
}

.ruler-corner button {
    width: 22px;
    height: 22px;
    border: 1px solid #8f949c;
    font-weight: bold;
    font-size: 10px;
    color: #333;
    background: #f5f6f7;
    box-shadow: inset 0 0 0 3px #cdd1d7, inset 0 0 0 4px #9a9fa7;
}

.ruler-top {
    display: flex;
    justify-content: center;
    padding-top: 8px;
}

.ruler-num {
    font-size: 9px;
    fill: #4b4f55;
    text-anchor: middle;
}

.ruler-left {
    min-height: 0;
    overflow: hidden;
    padding: 22px 0 0 5px;
}

.document {
    display: flex;
    flex-direction: column;
    align-items: center;
    gap: 15px;
    min-height: 0;
    overflow: hidden;
}

.page {
    width: 821px;
    flex: none;
    background: #fff;
    box-shadow: 0 0 7px 1px rgba(60, 65, 72, 0.65);
}

.page.previous {
    height: 8px;
}

.page.current {
    flex: 1;
    padding: 49px 0 0 29px;
}

/* results table */
table {
    width: 773px;
    table-layout: fixed;
    border-collapse: collapse;
    font-family: Lato, "Open Sans", sans-serif;
    font-size: 15px;
    font-weight: bold;
    line-height: 18px;
    color: #000;
}

th,
td {
    border: 1px solid #222;
    text-align: center;
    vertical-align: middle;
    white-space: nowrap;
}

.c-poids {
    width: 64px;
}

.c-nom {
    width: 170px;
}

.c-club,
.c-club2 {
    width: 69px;
}

.c-lic {
    width: 66px;
}

.c-bar {
    width: 6px;
}

.c-poids2 {
    width: 55px;
}

.c-nom2 {
    width: 206px;
}

.h20 {
    height: 20px;
}

.h21 {
    height: 21px;
}

.h22 {
    height: 22px;
}

.h24 {
    height: 24px;
}

.h25 {
    height: 25px;
}

.winner td:nth-child(-n+4) {
    background: #ff0;
}

.poids {
    vertical-align: top;
}

.divider {
    background: linear-gradient(90deg, #fff 1px, #000 1px, #000 5px, #fff 5px);
}

.small {
    font-size: 13px;
}

.left {
    padding-left: 8px;
    text-align: left;
}

.table-handle {
    display: block;
    width: 5px;
    height: 5px;
    margin-left: 773px;
    border: 1px solid #999;
}

/* scroll bar */
.scrollbar {
    grid-column: 3;
    grid-row: 1 / 3;
    display: flex;
    flex-direction: column;
    align-items: center;
    overflow: hidden;
    padding-top: 4px;
    background: #d6d9de;
}

.split {
    flex: none;
    width: 6px;
    height: 2px;
    background: #555;
}

.ruler-toggle {
    width: 12px;
    height: 16px;
    margin: 2px 0 5px;
    border: 1px solid #8f949c;
}

.thumb {
    width: 10px;
    height: 59px;
    flex: none;
    border: 1px solid #969ba3;
    border-right: 0;
    background: linear-gradient(#777, #777) center 27px / 6px 1px no-repeat,
        linear-gradient(#777, #777) center 30px / 6px 1px no-repeat, #f0f1f3;
}

.track-top {
    flex: 148;
}

.track-bottom {
    flex: 232;
}

.browse {
    display: flex;
    flex-direction: column;
    align-items: center;
    gap: 9px;
    width: 10px;
    margin-top: 5px;
    padding: 4px 0;
    border-top: 1px solid #9a9fa7;
}

/* status bar */
.status {
    display: flex;
    align-items: center;
    height: 21px;
    flex: none;
    padding: 0 12px 0 8px;
    border-top: 1px solid #878c93;
    font-size: 10px;
    background: linear-gradient(#e2e5e9, #bbc0c5);
}

.status > span {
    display: flex;
    align-items: center;
    height: 16px;
    border-right: 1px solid #8f949c;
    white-space: nowrap;
}

.s-page {
    width: 73px;
}

.s-words {
    width: 68px;
    padding-left: 9px;
}

.s-lang {
    width: 127px;
    gap: 15px;
    padding-left: 7px;
}

.views {
    display: flex;
    align-items: center;
    margin-left: auto;
    padding-left: 4px;
    border-left: 1px solid #8f949c;
}

.views button {
    width: 17px;
    height: 17px;
}

.zoom-value {
    width: 47px;
    padding-left: 10px;
    white-space: nowrap;
}

#zoom {
    appearance: none;
    width: 93px;
    height: 14px;
    background: linear-gradient(#83888f, #83888f) center / 100% 1px no-repeat;
}

#zoom::-webkit-slider-thumb {
    appearance: none;
    width: 9px;
    height: 12px;
    border: 1px solid #62676e;
    border-radius: 1px 1px 4px 4px;
    background: #f5f6f8;
}

.activation {
    position: absolute;
    right: 56px;
    bottom: 30px;
    font-size: 13px;
    line-height: 20px;
    color: rgba(125, 125, 125, 0.45);
    pointer-events: none;
}

.activation-title {
    font-size: 18px;
    line-height: 24px;
}

/* taskbar */
.taskbar {
    display: flex;
    height: 38px;
    flex: none;
    color: #fff;
    background: linear-gradient(90deg, #282226, #372826);
}

.start {
    width: 45px;
}

.search {
    display: flex;
    align-items: center;
    gap: 9px;
    width: 270px;
    padding-left: 11px;
    background: #f1f1f1;
}

.search input {
    flex: 1;
    min-width: 0;
    border: 0;
    outline: 0;
    font: 13px var(--ui-font);
    background: none;
}

.search input::placeholder {
    color: #3c3c3c;
}

.apps {
    display: flex;
}

.apps button {
    width: 46px;
    padding-top: 2px;
}

.apps .open {
    background: linear-gradient(#76b5e8, #76b5e8) center bottom / 38px 3px no-repeat;
}

.apps .current {
    background-color: #5c5657;
    background-size: 46px 3px;
}

.w-tile {
    width: 23px;
    height: 23px;
    border: 4px solid #757270;
    font: 11px/15px "Liberation Serif", serif;
    background: #000;
}

.whatsapp,
.notice {
    position: relative;
}

.badge {
    position: absolute;
    right: 4px;
    bottom: 5px;
    width: 16px;
    height: 16px;
    border: 1px solid #999;
    border-radius: 50%;
    font-weight: bold;
    line-height: 14px;
    background: #3a3433;
}

.tray {
    display: flex;
    margin-left: auto;
}

.tray button {
    width: 23px;
}

.tray .weather {
    width: 80px;
    gap: 8px;
    justify-content: flex-start;
}

.tray .lang {
    width: 34px;
}

.tray .clock {
    width: 68px;
    font-size: 11px;
    line-height: 17px;
}

.tray .notice {
    width: 49px;
    padding-right: 8px;
}

.tray .badge {
    right: 15px;
    bottom: 4px;
}
```
